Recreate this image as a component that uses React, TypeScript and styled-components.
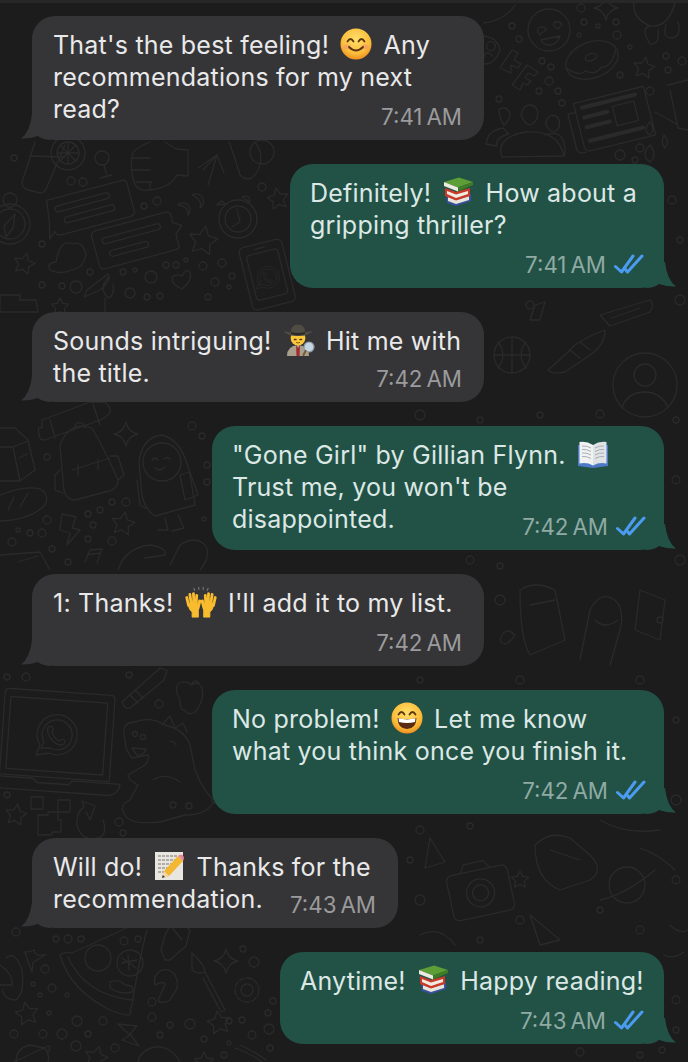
import React from 'react';
import styled, { createGlobalStyle } from 'styled-components';

const GlobalStyle = createGlobalStyle`
  html, body {
    margin: 0;
    padding: 0;
    background: #1c1c1d;
  }
`;

const Page = styled.div`
  position: relative;
  width: 688px;
  height: 1062px;
  overflow: hidden;
  background: #1c1c1d;
  font-family: Inter, "Liberation Sans", sans-serif;
`;

const TopEdge = styled.div`
  position: relative;
  height: 3px;
  background: #272728;
`;

const Wallpaper = styled.svg`
  position: absolute;
  inset: 0;
  width: 688px;
  height: 1062px;
  fill: none;
  stroke: #2a2a2b;
  stroke-width: 1.3;
  stroke-linejoin: round;
  stroke-linecap: round;
`;

const Thread = styled.div`
  position: relative;
  display: flex;
  flex-direction: column;
  gap: 24px;
  padding: 13px 24px 0 32px;
`;

const Bubble = styled.div<{ $out?: boolean; $width: number }>`
  position: relative;
  box-sizing: border-box;
  width: ${(p) => p.$width}px;
  align-self: ${(p) => (p.$out ? 'flex-end' : 'flex-start')};
  padding: 13px ${(p) => (p.$out ? 20 : 22)}px 11px ${(p) => (p.$out ? 20 : 21)}px;
  border-radius: 23px;
  background: ${(p) => (p.$out ? '#225246' : '#353537')};
  color: ${(p) => (p.$out ? '#dce8e5' : '#e9e9ea')};
`;

const Tail = styled.svg<{ $out?: boolean }>`
  position: absolute;
  bottom: 0;
  width: 30px;
  height: 30px;
  fill: ${(p) => (p.$out ? '#225246' : '#353537')};
  ${(p) => (p.$out ? 'right: -12px; transform: scaleX(-1);' : 'left: -11px;')}
`;

const Body = styled.div`
  position: relative;
  font-size: 25px;
  line-height: 32px;
  letter-spacing: 0.22px;
  white-space: nowrap;
`;

const Meta = styled.div<{ $out?: boolean; $offset: number; $wide?: boolean }>`
  position: relative;
  display: flex;
  align-items: center;
  justify-content: flex-end;
  gap: 8px;
  height: 26px;
  margin-top: ${(p) => p.$offset}px;
  margin-right: ${(p) => (p.$wide ? -2 : 0)}px;
  font-size: 22.3px;
  color: ${(p) => (p.$out ? '#90aaa4' : '#9b9b9d')};
`;

const EmojiBox = styled.svg`
  display: inline-block;
  width: 32px;
  height: 32px;
  margin: -4px 4px;
  vertical-align: -2px;
`;

const TickIcon = styled.svg`
  width: 30px;
  height: 20px;
  fill: none;
  stroke: #4b9cf0;
  stroke-width: 3;
  stroke-linecap: round;
  stroke-linejoin: round;
`;

const Ticks = () => (
  <TickIcon viewBox="0 0 30 20">
    <path d="M1.5 12.5 L7.5 18 L19 2" />
    <path d="M11 15 L13.5 18 L28 2" />
  </TickIcon>
);

const Smile = () => (
  <EmojiBox viewBox="0 0 32 32">
    <defs>
      <radialGradient id="sm" cx="50%" cy="35%" r="65%">
        <stop offset="0" stopColor="#ffdf6b" />
        <stop offset="0.7" stopColor="#fbbd3a" />
        <stop offset="1" stopColor="#ee8f1f" />
      </radialGradient>
    </defs>
    <circle cx="16" cy="16" r="15.5" fill="url(#sm)" />
    <ellipse cx="7" cy="19" rx="3.6" ry="2.4" fill="#f59a6a" opacity=".7" />
    <ellipse cx="25" cy="19" rx="3.6" ry="2.4" fill="#f59a6a" opacity=".7" />
    <path d="M7.5 13.5 Q10.5 8.5 13.5 13.5 M18.5 13.5 Q21.5 8.5 24.5 13.5" stroke="#5a3510" strokeWidth="1.8" fill="none" strokeLinecap="round" />
    <path d="M9 19 Q16 26 23 19" stroke="#5a3510" strokeWidth="1.8" fill="none" strokeLinecap="round" />
  </EmojiBox>
);

const Grin = () => (
  <EmojiBox viewBox="0 0 32 32">
    <defs>
      <radialGradient id="gr" cx="50%" cy="35%" r="65%">
        <stop offset="0" stopColor="#ffdf6b" />
        <stop offset="0.7" stopColor="#fbbd3a" />
        <stop offset="1" stopColor="#ee8f1f" />
      </radialGradient>
    </defs>
    <circle cx="16" cy="16" r="15.5" fill="url(#gr)" />
    <path d="M7.5 12.5 Q10.5 7.5 13.5 12.5 M18.5 12.5 Q21.5 7.5 24.5 12.5" stroke="#5a3510" strokeWidth="1.8" fill="none" strokeLinecap="round" />
    <path d="M6.5 16 Q16 18.5 25.5 16 Q25 27 16 27 Q7 27 6.5 16 Z" fill="#5a2a12" />
    <path d="M7.5 16.3 Q16 18.5 24.5 16.3 L24 20 Q16 22 8 20 Z" fill="#fff" />
  </EmojiBox>
);

const Books = () => (
  <EmojiBox viewBox="0 0 32 32">
    <path d="M4 18 L24 21 L29 18 L29 25 L14 30 L5 27 Z" fill="#3a4f9e" />
    <path d="M6 21 L14 24 L27 20 L27 24 L14 28 L6 25 Z" fill="#e9e6dc" />
    <path d="M3 12 L14 16 L28 12 L28 20 L14 24.5 L3 20 Z" fill="#c93a2b" />
    <path d="M5 15 L14 18.5 L26 15 L26 18 L14 22 L5 18 Z" fill="#f1ece0" />
    <path d="M2 6 L17 1.5 L31 6 L16 11.5 Z" fill="#5d9e36" />
    <path d="M2 6 L16 11.5 L16 15.5 L2 10 Z" fill="#ecebe2" />
    <path d="M16 11.5 L31 6 L31 9 L16 15.5 Z" fill="#3f7d24" />
  </EmojiBox>
);

const Detective = () => (
  <EmojiBox viewBox="0 0 32 32">
    <path d="M4 32 Q4 22 15 21 Q26 22 26 32 Z" fill="#a8a08c" />
    <path d="M13 21 L15 24 L17 21 L16.5 32 L13.5 32 Z" fill="#a12b2b" />
    <circle cx="15" cy="14" r="7.4" fill="#fbc83c" />
    <path d="M11.5 15.5 h1.5 M17 15.5 h1.5" stroke="#5a3510" strokeWidth="1.6" strokeLinecap="round" />
    <path d="M13 18.4 Q15 19.6 17 18.4" stroke="#8a5a1a" strokeWidth="1" fill="none" />
    <path d="M8 8 Q8 0.5 15 0.5 Q22 0.5 22 8 Q28 8 30 6 Q27 12 15 12 Q3 12 0 6 Q2 8 8 8 Z" fill="#4f4c44" />
    <path d="M8 8 Q15 10 22 8 L22 10 Q15 12.5 8 10 Z" fill="#2a2925" />
    <circle cx="26" cy="23" r="5" fill="#c3d6e2" stroke="#8c99a3" strokeWidth="1.2" />
    <path d="M22.5 27 L20.5 31" stroke="#7b5a36" strokeWidth="2" strokeLinecap="round" />
  </EmojiBox>
);

const OpenBook = () => (
  <EmojiBox viewBox="0 0 32 32">
    <path d="M1 7 L16 9 L31 7 L31 28 L16 30 L1 28 Z" fill="#4d79c7" />
    <path d="M2.5 4 Q10 3 16 7 L16 27.5 Q10 24 2.5 25.5 Z" fill="#f1f2f2" />
    <path d="M29.5 4 Q22 3 16 7 L16 27.5 Q22 24 29.5 25.5 Z" fill="#dfe3e6" />
    <path d="M5 8 Q10 7.5 14 10 M5 11.5 Q10 11 14 13.5 M5 15 Q10 14.5 14 17 M5 18.5 Q10 18 14 20.5 M27 8 Q22 7.5 18 10 M27 11.5 Q22 11 18 13.5 M27 15 Q22 14.5 18 17 M27 18.5 Q22 18 18 20.5" stroke="#a9adb3" strokeWidth="1" fill="none" />
  </EmojiBox>
);

const Hand = ({ flip }: { flip?: boolean }) => (
  <g transform={flip ? 'translate(36 0) scale(-1 1)' : undefined} stroke="#f8bc2e" strokeLinecap="round" fill="none">
    <path d="M2 13 L4 22 M5.5 9.5 L7 20 M9.5 8.5 L10 20 M13.2 10.5 L12.5 21" strokeWidth="3.2" />
    <path d="M16.5 17 L14.5 25" strokeWidth="3.6" />
    <path d="M4 20 Q4 27 8 29 L8 35 L15 35 L15 26 L14 20 Z" fill="#f8bc2e" strokeWidth="1" />
  </g>
);

const Hands = () => (
  <EmojiBox viewBox="0 0 36 36">
    <path d="M11 5 L10 2.5 M15.5 4 L15.5 1.5 M20.5 4 L20.5 1.5 M25 5 L26 2.5" stroke="#77777a" strokeWidth="1.2" strokeLinecap="round" />
    <Hand />
    <Hand flip />
  </EmojiBox>
);

const Memo = () => (
  <EmojiBox viewBox="0 0 32 32">
    <path d="M2 2 H30 V30 H2 Z" fill="#e8e6df" />
    <path d="M5 6 h20 M5 10 h22 M5 14 h16 M5 18 h12 M5 22 h8" stroke="#77756f" strokeWidth="1" strokeDasharray="3 1" />
    <path d="M9 28 L11 21 L25 6 L30 11 L16 26 Z" fill="#f3b731" />
    <path d="M25 6 Q27 3.5 29.5 5 Q32 7.5 30 11 Z" fill="#e3899a" />
    <path d="M9 28 L11 21 L16 26 Z" fill="#f1d8ae" />
    <path d="M9 28 L9.8 25 L12 27 Z" fill="#333" />
  </EmojiBox>
);

const Star = ({ x, y, r, rot = 0 }: { x: number; y: number; r: number; rot?: number }) => {
  const pts = Array.from({ length: 10 }, (_, i) => {
    const a = ((i * 36 - 90 + rot) * Math.PI) / 180;
    const d = i % 2 ? r * 0.5 : r;
    return `${(x + d * Math.cos(a)).toFixed(1)},${(y + d * Math.sin(a)).toFixed(1)}`;
  });
  return <polygon points={pts.join(' ')} />;
};

const Sparkle = ({ x, y, r }: { x: number; y: number; r: number }) => (
  <path d={`M${x} ${y - r} Q${x + 2} ${y - 2} ${x + r} ${y} Q${x + 2} ${y + 2} ${x} ${y + r} Q${x - 2} ${y + 2} ${x - r} ${y} Q${x - 2} ${y - 2} ${x} ${y - r} Z`} />
);

const WaLogo = ({ x, y, r }: { x: number; y: number; r: number }) => (
  <g transform={`translate(${x} ${y}) scale(${r / 20})`}>
    <path d="M-19 19 L-15 9 A20 20 0 1 1 -6 17 Z" />
    <path d="M-14 12 L-11 6 A15 15 0 1 1 -5 12 Z" />
    <path d="M-7 -9 Q-3 -11 -2 -7 L-3 -3 Q0 3 4 5 L8 3 Q11 5 9 8 Q3 11 -3 4 Q-9 -3 -7 -9 Z" />
  </g>
);

const dots: [number, number, number][] = [
  [14, 158, 3], [71, 181, 4], [83, 182, 4], [157, 201, 4], [144, 206, 3], [42, 244, 3], [42, 285, 3], [62, 286, 3], [76, 287, 6],
  [90, 272, 3], [123, 272, 3], [135, 270, 2], [151, 277, 6], [176, 265, 3], [186, 260, 2], [203, 266, 4], [222, 263, 4], [166, 265, 3],
  [215, 282, 4], [232, 276, 3], [229, 287, 2], [130, 293, 5], [147, 297, 3], [160, 296, 3], [208, 297, 3], [262, 187, 4],
  [47, 457, 3], [47, 520, 4], [18, 530, 2], [30, 533, 3], [42, 533, 4], [12, 542, 4], [52, 549, 3], [68, 562, 3],
  [88, 514, 3], [100, 510, 3], [112, 502, 3], [126, 502, 4], [93, 525, 3], [88, 539, 3], [112, 541, 4], [192, 426, 4], [202, 436, 3],
  [207, 465, 3], [207, 482, 3], [204, 519, 2],
  [581, 8, 4], [512, 26, 3], [584, 22, 3], [598, 26, 2], [616, 22, 3], [579, 35, 2], [617, 35, 4], [519, 39, 3], [542, 61, 3],
  [551, 67, 3], [549, 81, 4], [539, 91, 3], [558, 91, 3], [562, 103, 3], [499, 99, 3], [630, 47, 2], [666, 56, 3], [682, 61, 4], [668, 70, 3],
  [650, 91, 4], [620, 75, 3], [620, 155, 5], [635, 160, 3],
  [26, 677, 4], [7, 677, 3], [129, 675, 3], [159, 704, 4], [7, 795, 3], [119, 822, 4], [123, 833, 3], [173, 805, 3], [189, 806, 3], [215, 800, 3],
  [16, 932, 4], [56, 939, 3], [68, 939, 4], [81, 939, 3], [124, 941, 4], [138, 939, 3], [45, 969, 4], [33, 984, 2], [52, 988, 4], [40, 995, 2], [67, 995, 2],
  [152, 1002, 4], [152, 1017, 4], [49, 1013, 2], [77, 1021, 5], [103, 1021, 4], [14, 1034, 4], [43, 1034, 4], [62, 1034, 5], [88, 1034, 3], [76, 1046, 5], [115, 1048, 4],
  [170, 1025, 3], [160, 1035, 3], [190, 1024, 5], [204, 1039, 3], [229, 1021, 3], [242, 1020, 3], [229, 1043, 2], [224, 1055, 3],
  [243, 949, 3], [254, 962, 5], [273, 1001, 3], [268, 1013, 3], [252, 1035, 4], [269, 1029, 5], [270, 1048, 3],
  [640, 148, 4], [530, 305, 4], [480, 420, 3], [420, 415, 5], [470, 560, 4], [500, 566, 3], [520, 680, 4], [420, 680, 3], [540, 415, 3], [600, 414, 4],
  [672, 200, 4], [680, 240, 3], [680, 300, 5], [676, 420, 3], [676, 480, 4], [680, 560, 5], [500, 600, 5], [660, 620, 3], [640, 680, 4], [676, 720, 3], [676, 800, 5],
  [420, 830, 4], [470, 826, 3], [520, 920, 4], [600, 910, 3], [410, 860, 3], [420, 900, 5], [640, 930, 4], [480, 940, 3], [676, 880, 4], [676, 1000, 4], [662, 1050, 3], [580, 1052, 4], [640, 1055, 3], [676, 1030, 3],
];

const WallpaperArt = () => (
  <Wallpaper viewBox="0 0 688 1062">
    {dots.map(([x, y, r], i) => (
      <circle key={i} cx={x} cy={y} r={r} />
    ))}

    {/* strip under the first bubble */}
    <path d="M35 142 L22 182 Q22 188 28 190 L40 193 Q44 193 46 189 L65 145 M30 156 L65 157" />
    <circle cx="68" cy="153" r="17" />
    <circle cx="68" cy="153" r="11" />
    <path d="M68 142 V164 M57 153 H79 M60 145 L76 161 M76 145 L60 161" />
    <circle cx="102" cy="158" r="7" />
    <path d="M104 165 L107 176 M100 178 L112 175" />
    <path d="M150 142 Q130 150 132 158 Q130 170 134 182 Q137 192 150 190 Q170 188 177 175 L188 176 V150 L176 149 L165 142" />
    <path d="M132 158 H150 M132 170 H150 M136 182 H152 M150 190 V182" />
    <path d="M203 170 L217 155 L224 173 M217 155 L208 185 M217 155 L198 168" />
    <path d="M229 142 Q234 155 240 175 Q250 185 258 170 Q265 155 255 142" />
    <circle cx="262" cy="152" r="12" />

    {/* chat bubbles, compass, clock */}
    <g transform="rotate(-15 88 208)">
      <path d="M50 190 H127 Q132 190 132 195 V222 Q132 227 127 227 H56 Q50 227 50 222 L43 228 L47 212 Z" />
      <rect x="56" y="198" width="56" height="6" rx="3" />
      <rect x="62" y="211" width="52" height="6" rx="3" />
    </g>
    <g transform="rotate(-15 135 240)">
      <path d="M99 221 H172 Q176 221 176 226 V233 L184 238 L176 245 V256 Q176 260 172 260 H99 Q94 260 94 256 V226 Q94 221 99 221 Z" />
      <rect x="103" y="230" width="60" height="6" rx="3" />
      <rect x="107" y="244" width="40" height="6" rx="3" />
    </g>
    <circle cx="10" cy="224" r="20" />
    <circle cx="10" cy="224" r="15" />
    <circle cx="10" cy="200" r="7" />
    <path d="M15 214 L4 226 L6 237 L13 228 Z" />
    <circle cx="238" cy="219" r="19" />
    <circle cx="238" cy="219" r="13" />
    <path d="M237 209 L240 222 L232 227" />
    <path d="M217 205 Q222 198 225 204 Z M242 197 Q250 194 250 202 Z" />
    <path d="M178 205 A7 7 0 1 1 188 215 Q189 206 178 205 Z M192 195 A7 7 0 1 1 200 208 Q203 200 192 195 Z" />
    <Star x={203} y={241} r={15} rot={10} />
    <Star x={24} y={264} r={11} rot={15} />
    <Star x={278} y={199} r={11} rot={-10} />
    <path d="M56 262 Q60 238 73 244 Q82 240 86 254 Q84 268 72 270 Q60 275 50 270 Q46 263 56 262 Z" />
    <path d="M182 289 Q172 285 172 278 Q175 273 182 276 Q186 268 190 272 Q193 280 182 289 Z" />
    <g transform="rotate(-14 265 270)">
      <rect x="244" y="243" width="44" height="64" rx="5" />
      <rect x="250" y="252" width="32" height="46" rx="3" />
      <path d="M260 247.5 H270" />
    </g>
    <WaLogo x={267} y={278} r={11} />
    <path d="M87 290 L108 274 Q112 280 100 290 L84 297 Z M108 278 Q98 288 108 298 Q115 296 113 284 M105 298 V312" />
    <path d="M0 295 H20 V300 L36 300 L38 312 H0 Z" />
    <Star x={60} y={307} r={9} rot={0} />

    {/* strip under third bubble: backpack, astronaut, carton */}
    <path d="M0 428 H15 L28 440 L35 470 L20 481 H0 M0 447 H13 L28 441 M13 447 L20 481 M19 458 L27 454" />
    <path d="M42 428 Q36 425 40 438 Q42 442 50 438 L100 420 Q112 415 110 408 L105 402 L90 402 L42 420 Z M50 420 L55 438 M93 404 L100 425" />
    <path d="M75 428 Q75 421 82 423 Q85 425 85 428" />
    <path d="M60 445 Q70 420 92 428 Q105 450 118 480 Q118 490 105 492 L75 500 Q63 500 63 480 Z" />
    <path d="M72 470 L110 458 M78 465 V475 M98 459 V469" />
    <path d="M60 470 L55 475 V490 L63 493 M110 456 L118 456 L124 475 L118 480" />
    <circle cx="162" cy="462" r="19" />
    <path d="M139 462 Q142 437 162 435 Q183 440 190 475 L195 505 L155 516 Q145 510 142 495 Z" />
    <path d="M152 460 Q155 456 158 460 M164 459 Q167 456 170 459 M155 468 Q160 472 165 467" />
    <path d="M180 475 L190 472 L198 495 L185 500 Z M137 480 L140 505 L145 508 M165 518 L168 530 L158 530 M178 515 L184 528 L172 531" />
    <Sparkle x={126} y={434} r={12} />
    <path d="M0 495 Q25 485 40 489 Q50 495 45 505 Q30 520 0 521 M14 497 L8 510 M28 493 L20 507" />
    <path d="M62 514 L76 517 L72 528 L80 530 L67 545 L70 533 L60 530 Z" />
    <Star x={123} y={524} r={12} rot={10} />
    <path d="M85 562 L90 550 L102 549 L97 563 M87 555 L100 553" />
    <path d="M0 555 L40 552 L50 570 M18 562 L38 556" />
    <path d="M118 570 Q125 548 150 545 Q168 548 165 555 L145 558 M170 565 L180 545 Q195 535 205 545 Q212 555 200 570" />

    {/* strip under bubble six and laptop */}
    <g transform="rotate(4 60 740)">
      <path d="M8 692 H108 Q112 692 112 696 V778 H2 V696 Q2 692 8 692 Z" />
      <path d="M8 700 H105 V772 H8 Z" />
      <path d="M-8 780 H36 L40 784 H72 L75 780 H123 Q122 790 112 792 H-8" />
    </g>
    <WaLogo x={55} y={736} r={20} />
    <path d="M122 702 L160 668 L167 670 L164 680 L130 708 Q125 710 122 702 Z M130 695 L138 703 M135 690 L143 698" />
    <path d="M180 700 Q172 685 182 682 Q188 681 192 685 Q198 680 202 688 Q205 700 195 712 Q188 716 185 710 Q180 712 180 700 Z M192 685 Q193 678 199 683" />
    <path d="M125 740 Q120 722 135 722 Q150 716 165 725 Q185 730 190 745 L195 770 Q205 795 215 800 Q208 815 185 815 L160 822 Q130 825 125 815 Q118 805 130 800 L138 785 L130 780 L128 775 L145 765 Q150 760 148 755 L132 758 Q125 750 125 740 Z" />
    <path d="M162 725 L170 716 L175 728 L183 723 L187 732" />
    <path d="M132 748 L146 749 Q144 756 137 755 Z M170 742 Q174 740 176 745 M153 780 Q165 772 180 782" />
    <circle cx="135" cy="734" r="2.5" />
    <circle cx="143" cy="737" r="2.5" />
    <Star x={16} y={815} r={11} rot={10} />
    <path d="M31 797 H43 V809 H31 Z M58 800 H70 V812 H58 Z M38 815 H48 V812 H58 V820 H61 V832 H52 V835 H38 V822 Z" />
    <path d="M103 820 Q108 835 98 838 Q82 842 77 825 Q76 812 84 807 L82 801 L95 806 L90 820 L86 812" />

    {/* pizza, brush and the rest of the bottom left */}
    <path d="M60 955 Q70 990 110 1010 Q135 1020 130 1010 L132 1005 Q140 955 147 930 M60 955 Q65 951 72 953 L133 925" />
    <path d="M68 957 Q85 995 132 1000" />
    <circle cx="98" cy="958" r="13" />
    <circle cx="130" cy="963" r="13" />
    <path d="M128 955 L129 970 M122 963 L137 960 M122 958 L136 968" />
    <path d="M110 982 Q118 978 125 985 Q135 985 132 992 Q120 995 110 988 Z" />
    <path d="M6 958 Q15 950 22 970 Q25 995 15 1000 Q5 1000 2 990 M0 965 Q14 975 12 985 L0 985" />
    <path d="M34 950 Q35 958 46 954 Q38 960 33 962 L32 972 Q28 962 25 952 Q30 952 34 950 Z" />
    <Star x={27} y={1014} r={12} rot={-10} />
    <path d="M165 935 L172 922 H180 L190 930 L186 946 L170 960 H165 L161 950 L165 935 Z" />
    <path d="M170 925 L182 940 M155 985 Q152 975 162 970 Q170 968 175 975 Q180 985 175 992 L170 1000 Q160 1005 158 1000 L165 985 Q165 980 155 985" />
    <path d="M192 953 Q205 965 205 972 Q198 975 192 970 Z M205 972 L225 1010 L221 1012 L203 978" />
    <Sparkle x={226} y={961} r={12} />
    <g transform="translate(247 990)">
      <circle r="6" />
      <circle r="12" strokeDasharray="6 2" />
    </g>
    <Star x={219} y={1023} r={12} rot={-10} />
    <path d="M118 1024 L137 1026 L130 1034 L139 1046 L122 1040 L130 1035 Z" />
    <path d="M16 1062 Q16 1048 30 1045 L45 1048 Q50 1055 48 1062 M14 1062 L48 1046 Q52 1045 48 1052" />
    <Star x={96} y={1058} r={12} rot={15} />
    <path d="M138 1062 Q140 1050 155 1047 Q170 1045 180 1062" />
    <path d="M235 1048 Q248 1052 262 1062 M240 1045 Q252 1050 266 1060" />
    <Star x={204} y={1062} r={10} />

    {/* right column, top */}
    <circle cx="549" cy="30" r="21" />
    <path d="M540 35 Q535 29 540 27 Q545 26 546 30 Q540 34 540 35 Z M558 29 Q551 25 555 22 Q559 21 562 24 L558 29 Z" />
    <path d="M541 40 L560 36 Q557 45 550 45 Q543 45 541 40 Z" />
    <Sparkle x={606} y={8} r={12} />
    <path d="M484 23 Q505 20 515 5" />
    <path d="M634 3 Q632 18 650 26 Q668 28 675 3 M650 26 Q640 28 650 44 Q660 45 658 30 M666 25 Q662 38 672 38 Q682 36 678 22" />
    <g transform="rotate(-20 592 60)">
      <ellipse cx="592" cy="60" rx="27" ry="18" />
      <ellipse cx="592" cy="57" rx="6" ry="3.5" />
      <path d="M566 60 Q575 72 582 68 Q590 76 598 70 Q608 74 618 58" />
    </g>
    <path d="M484 36 Q498 38 500 50 Q495 64 484 64 M487 48 A4 4 0 1 0 495 44 A4 4 0 1 0 487 48 M484 58 A4 4 0 1 1 492 56" />
    <path d="M511 73 L500 68 L512 50 L518 53 L514 60 L521 64 L518 68 L511 65 Z" />
    <path d="M520 90 L512 85 L527 65 L538 72 L534 76 L528 73 L525 78 L531 81 L527 85 L523 83 Z" />
    <Star x={644} y={68} r={11} rot={10} />
    <path d="M499 110 Q499 118 504 125 Q510 120 510 114 Q508 108 504 108 Q499 108 499 110 Z M530 105 Q523 105 521 115 Q525 125 530 125 Q538 122 538 112 Q536 105 530 105 Z M552 115 Q545 118 546 125 Q550 133 556 131 Q562 125 558 118 Q555 115 552 115 Z" />
    <path d="M486 144 Q488 130 503 128 L509 134 Q495 137 497 146 Z M502 157 Q495 138 525 132 Q555 130 562 150 L564 156 Z M545 135 Q565 128 565 152 L564 156" />
    <g transform="rotate(-14 607 118)">
      <path d="M578 96 H650 V146 H585 Q578 146 578 140 Z M578 105 H570 V142 Q572 147 578 146" />
      <path d="M585 102 H640 M585 112 H609 M585 122 H609 M585 136 H640" strokeWidth="4" />
      <rect x="615" y="108" width="22" height="20" />
    </g>
    <path d="M650 122 Q642 130 650 135 Q656 130 650 122 Z M664 135 Q660 142 665 148 Q670 142 664 135 Z M650 145 Q640 155 650 162 Q658 155 650 145 Z" />
    <path d="M668 85 L688 80 M670 90 L678 128 L688 130 M655 112 Q670 120 678 125" />

    {/* right column, middle */}
    <circle cx="645" cy="385" r="32" />
    <circle cx="645" cy="375" r="11" />
    <path d="M622 407 Q628 392 645 392 Q660 392 668 407" />
    <circle cx="512" cy="355" r="18" />
    <path d="M494 355 H530 M512 337 V373 M498 342 Q508 355 498 368 M526 342 Q516 355 526 368" />
    <path d="M548 370 Q560 360 575 345 Q590 335 605 330 Q605 345 590 355 L565 372 Q553 375 548 370 Z M570 350 L580 358 M580 342 L590 350" />
    <path d="M600 315 L650 300 Q655 305 650 312 L610 326 Z M612 318 L640 308" />
    <path d="M530 320 L535 305 L545 302 L540 320 Z" />

    <path d="M520 590 Q535 580 555 590 L565 640 L530 655 Q520 640 520 590 Z M530 605 L555 600" />
    <path d="M580 660 L590 610 Q600 590 615 600 Q625 610 620 630 L610 665 M595 620 Q605 630 618 620" />
    <path d="M640 590 L665 600 L660 640 L635 630 Z" />
    <path d="M500 640 Q505 625 515 635 Q505 650 500 640 Z" />

    {/* middle strip near the bottom */}
    <g transform="rotate(-12 480 895)">
      <rect x="450" y="870" width="62" height="46" rx="6" />
      <circle cx="481" cy="893" r="14" />
      <circle cx="481" cy="893" r="8" />
      <path d="M465 870 L470 862 H490 L495 870" />
    </g>
    <path d="M535 845 Q550 830 570 838 L590 855 Q605 870 590 880 L560 890 Q535 880 535 845 Z M550 850 L580 860" />
    <circle cx="627" cy="885" r="18" />
    <path d="M600 900 Q625 895 655 870" />
    <path d="M420 935 Q440 925 455 945 M530 915 L560 940 L540 945 Z" />
    <Star x={520} y={880} r={9} />
    <path d="M430 838 L445 862 L425 868 Z" />
    <path d="M600 820 Q625 835 660 830 M640 848 Q660 855 675 870" />
    <path d="M670 925 Q680 935 688 930 M664 955 Q672 960 684 952" />
  </Wallpaper>
);

const NNBSP = '\u202F';

type BubbleProps = {
  out?: boolean;
  wide?: boolean;
  width: number;
  time: string;
  offset: number;
  children: React.ReactNode;
};

const Message = ({ out, wide, width, time, offset, children }: BubbleProps) => (
  <Bubble $out={out} $width={width}>
    <Tail $out={out} viewBox="0 0 30 30">
      <path d="M11 4 Q9 22 0 28.5 Q8 29 17 26 Q22 30 30 30 L30 4 Z" />
    </Tail>
    <Body>{children}</Body>
    <Meta $out={out} $offset={offset} $wide={wide}>
      {time}
      {out && <Ticks />}
    </Meta>
  </Bubble>
);

export default function App() {
  return (
    <Page>
      <GlobalStyle />
      <WallpaperArt />
      <TopEdge />
      <Thread>
        <Message width={452} time={`7:41${NNBSP}AM`} offset={-22}>
          That's the best feeling! <Smile /> Any
          <br />
          recommendations for my next
          <br />
          read?
        </Message>
        <Message out width={374} time={`7:41${NNBSP}AM`} offset={10}>
          Definitely! <Books /> How about a
          <br />
          gripping thriller?
        </Message>
        <Message width={452} time={`7:42${NNBSP}AM`} offset={-24}>
          Sounds intriguing! <Detective /> Hit me with
          <br />
          the title.
        </Message>
        <Message out wide width={452} time={`7:42${NNBSP}AM`} offset={-22}>
          "Gone Girl" by Gillian Flynn. <OpenBook />
          <br />
          Trust me, you won't be
          <br />
          disappointed.
        </Message>
        <Message width={452} time={`7:42${NNBSP}AM`} offset={10}>
          1: Thanks! <Hands /> I'll add it to my list.
        </Message>
        <Message out wide width={452} time={`7:42${NNBSP}AM`} offset={10}>
          No problem! <Grin /> Let me know
          <br />
          what you think once you finish it.
        </Message>
        <Message width={366} time={`7:43${NNBSP}AM`} offset={-24}>
          Will do! <Memo /> Thanks for the
          <br />
          recommendation.
        </Message>
        <Message out width={384} time={`7:43${NNBSP}AM`} offset={10}>
          Anytime! <Books /> Happy reading!
        </Message>
      </Thread>
    </Page>
  );
}
